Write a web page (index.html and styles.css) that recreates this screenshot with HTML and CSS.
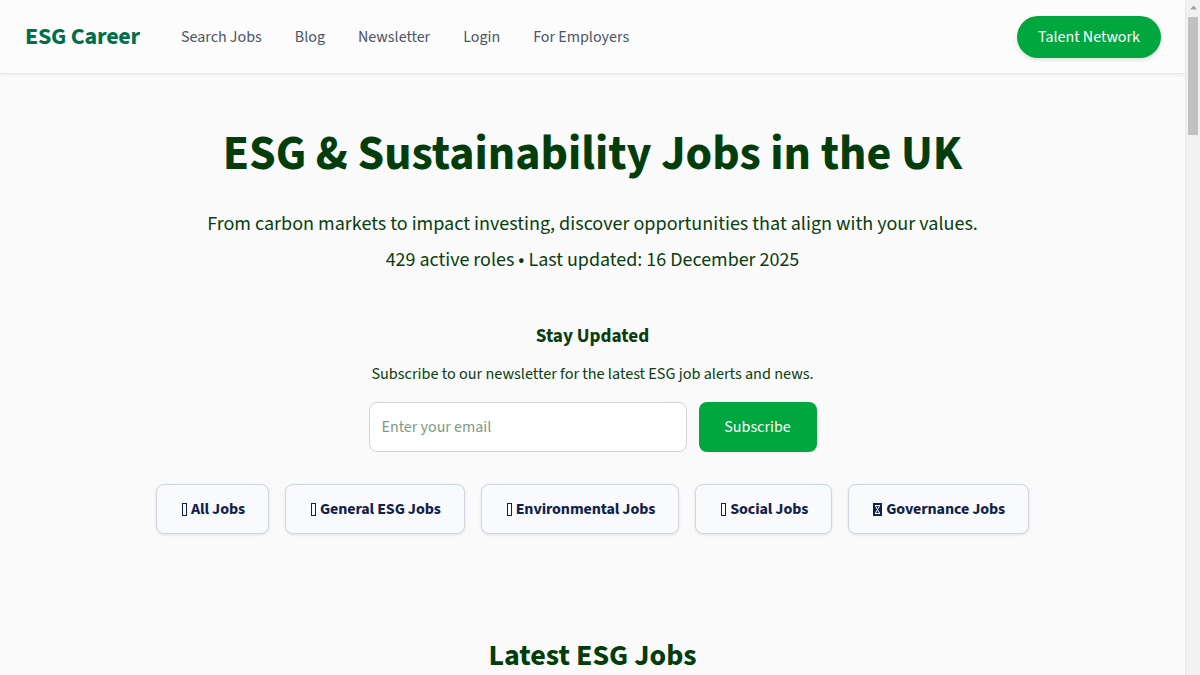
FILE: index.html
```html
<!DOCTYPE html>
<html lang="en">
<head>
<meta charset="utf-8">
<title>ESG Career - ESG & Sustainability Jobs in the UK</title>
<link rel="stylesheet" href="styles.css">
</head>
<body>
<div class="page">
<header class="nav">
  <div class="nav-left">
    <a class="logo" href="#">ESG Career</a>
    <nav class="links">
      <a href="#">Search Jobs</a>
      <a href="#">Blog</a>
      <a href="#">Newsletter</a>
      <a href="#">Login</a>
      <a href="#">For Employers</a>
    </nav>
  </div>
  <a class="talent" href="#">Talent Network</a>
</header>
<main class="main">
  <section class="hero">
    <h1 class="title">ESG &amp; Sustainability Jobs in the UK</h1>
    <p class="sub">From carbon markets to impact investing, discover opportunities that align with your values.</p>
    <p class="stats">429 active roles • Last updated: 16 December 2025</p>
    <h2 class="stay">Stay Updated</h2>
    <p class="stay-text">Subscribe to our newsletter for the latest ESG job alerts and news.</p>
    <form class="form">
      <input class="email" type="email" placeholder="Enter your email">
      <button class="subscribe" type="button">Subscribe</button>
    </form>
    <div class="cats">
      <a class="cat" href="#"><span class="tofu"></span>All Jobs</a>
      <a class="cat" href="#"><span class="tofu"></span>General ESG Jobs</a>
      <a class="cat" href="#"><span class="tofu"></span>Environmental Jobs</a>
      <a class="cat" href="#"><span class="tofu"></span>Social Jobs</a>
      <a class="cat" href="#"><svg class="tofu-x" width="9" height="13" viewBox="0 0 9 13"><rect x="0" y="0" width="9" height="13" fill="#13214a"/><path d="M2 2.5h5M2 10.5h5M2.5 3l4 7M6.5 3l-4 7" stroke="#fff" stroke-width="1" fill="none"/></svg>Governance Jobs</a>
    </div>
  </section>
  <section class="latest">
    <h2 class="latest-title">Latest ESG Jobs</h2>
    <div class="spacer"></div>
  </section>
</main>
</div>
<div class="scrollbar" aria-hidden="true">
  <svg class="arrow" width="15" height="15" viewBox="0 0 15 15"><path d="M4 9.5 7.5 5.5 11 9.5Z" fill="#a3a3a3"/></svg>
  <div class="thumb"></div>
</div>
</body>
</html>
```
FILE: styles.css
```css
* { box-sizing: border-box; }
html, body { margin: 0; padding: 0; }
body {
  background: #fafafa;
  font-family: "Source Sans 3", "Source Sans Pro", Lato, "Noto Sans", sans-serif;
  color: #0a3d0f;
}
.page { margin-right: 15px; }
a { text-decoration: none; }
.nav {
  height: 74px;
  background: #fcfcfc;
  border-bottom: 1px solid #e5e7eb;
  box-shadow: 0 1px 3px rgba(0,0,0,0.06);
  display: flex;
  align-items: center;
  justify-content: space-between;
  padding: 0 24px 0 25px;
}
.nav-left { display: flex; align-items: center; }
.logo {
  font-size: 24px;
  font-weight: 700;
  color: #00704a;
  margin-right: 41px;
  letter-spacing: -0.2px;
}
.links { display: flex; gap: 33px; }
.links a {
  font-size: 16px;
  color: #4b5563;
}
.talent {
  background: #00a63e;
  color: #fff;
  font-size: 16px;
  height: 42px;
  padding: 0 21px;
  display: flex;
  align-items: center;
  border-radius: 21px;
  box-shadow: 0 2px 4px rgba(0,0,0,0.12);
}
.main { display: flex; flex-direction: column; align-items: center; }
.hero {
  padding-top: 51px;
  display: flex;
  flex-direction: column;
  align-items: center;
  text-align: center;
}
.title {
  margin: 0;
  font-size: 48px;
  line-height: 58px;
  font-weight: 700;
  color: #033d0c;
}
.sub {
  margin: 26px 0 0;
  font-size: 20.1px;
  line-height: 30px;
}
.stats {
  margin: 6px 0 0;
  font-size: 20px;
  line-height: 30px;
}
.stay {
  margin: 46px 0 0;
  font-size: 19.2px;
  line-height: 30px;
  font-weight: 700;
}
.stay-text {
  margin: 11px 0 0;
  font-size: 16.2px;
  line-height: 24px;
}
.form {
  margin-top: 16px;
  display: flex;
  gap: 12px;
}
.email {
  width: 318px;
  height: 50px;
  border: 1px solid #d1d5db;
  border-radius: 8px;
  background: #fff;
  padding: 0 12px;
  font-family: inherit;
  font-size: 16px;
  color: #0a3d0f;
}
.email::placeholder { color: #7f9a85; }
.subscribe {
  width: 118px;
  height: 50px;
  border: none;
  border-radius: 8px;
  background: #00a63e;
  color: #fff;
  font-family: inherit;
  font-size: 16px;
}
.cats {
  margin-top: 32px;
  display: flex;
  gap: 16px;
}
.cat {
  height: 50px;
  padding: 0 23px;
  display: flex;
  align-items: center;
  background: #f8fafc;
  border: 1px solid #cfd6e0;
  border-radius: 8px;
  box-shadow: 0 1px 3px rgba(0,0,0,0.1);
  font-size: 16px;
  font-weight: 700;
  letter-spacing: -0.1px;
  color: #13214a;
}
.tofu {
  display: inline-block;
  width: 5px;
  height: 13px;
  border: 1px solid #13214a;
  margin: 0 4px 0 2px;
}
.tofu-x { margin: 0 4px 0 1px; }
.latest {
  margin-top: 104px;
  display: flex;
  flex-direction: column;
  align-items: center;
}
.latest-title {
  margin: 0;
  font-size: 30px;
  line-height: 36px;
  font-weight: 700;
  color: #033d0c;
}
.spacer { height: 400px; }
.scrollbar {
  position: fixed;
  top: 0;
  right: 0;
  width: 15px;
  height: 100vh;
  background: #f1f1f1;
  border-left: 1px solid #e8e8e8;
}
.arrow { display: block; }
.thumb {
  margin: 2px 2px 0 2px;
  height: 118px;
  background: #c1c1c1;
}
```
